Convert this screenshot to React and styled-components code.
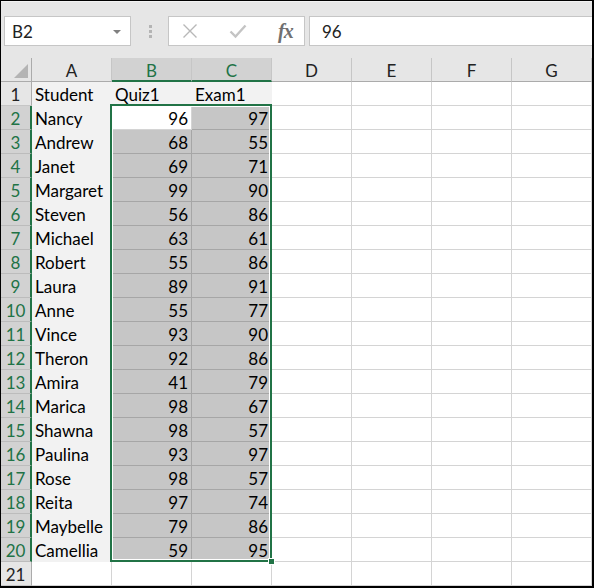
import React from "react";
import styled, { createGlobalStyle } from "styled-components";

const GREEN = "#217346";

const GlobalStyle = createGlobalStyle`
  body {
    margin: 0;
    background: #fff;
    font-family: Lato, "Liberation Sans", sans-serif;
  }
`;

const Frame = styled.div`
  width: 594px;
  height: 588px;
  box-sizing: border-box;
  border: 1px solid #000;
  border-right-width: 2px;
  border-bottom-width: 2px;
  overflow: hidden;
  background: #fff;
  font-size: 17px;
  color: #000;
`;

const Toolbar = styled.div`
  height: 57px;
  box-sizing: border-box;
  background: #e6e6e6;
  border-top: 1px solid #f2f2f2;
  display: flex;
  align-items: flex-start;
  padding: 14px 0 0 3px;
`;

const NameBox = styled.div`
  width: 127px;
  height: 30px;
  box-sizing: border-box;
  background: #fff;
  border: 1px solid #c6c6c6;
  display: flex;
  align-items: center;
  justify-content: space-between;
  padding: 1px 9px 0 7px;
  color: #222;
`;

const DropArrow = styled.span`
  width: 0;
  height: 0;
  border-left: 4px solid transparent;
  border-right: 4px solid transparent;
  border-top: 4px solid #808080;
`;

const Grip = styled.div`
  margin: 9px 0 0 18px;
  display: flex;
  flex-direction: column;
  gap: 2px;
  span {
    width: 3px;
    height: 3px;
    background: #b4b4b4;
  }
`;

const FuncBox = styled.div`
  margin-left: 16px;
  width: 137px;
  height: 30px;
  box-sizing: border-box;
  background: #fff;
  border: 1px solid #c6c6c6;
  display: flex;
  align-items: center;
  padding-left: 13px;
  gap: 31px;
`;

const Fx = styled.span`
  font-family: "Liberation Serif", serif;
  font-style: italic;
  font-weight: bold;
  font-size: 20px;
  color: #707070;
  letter-spacing: -1px;
`;

const FormulaInput = styled.div`
  flex: 1;
  margin: 0 -4px 0 4px;
  height: 30px;
  box-sizing: border-box;
  background: #fff;
  border: 1px solid #c6c6c6;
  display: flex;
  align-items: center;
  padding: 1px 0 0 12px;
  color: #222;
`;

const Sheet = styled.div`
  position: relative;
  display: grid;
  grid-template-columns: 31px repeat(7, 80px);
  grid-auto-rows: 24px;
`;

const Corner = styled.div`
  background: #e6e6e6;
  border-right: 1px solid #ababab;
  border-bottom: 1px solid #ababab;
  box-sizing: border-box;
  display: flex;
  align-items: flex-end;
  justify-content: flex-end;
  padding: 0 3px 3px 0;
`;

const ColHead = styled.div`
  box-sizing: border-box;
  background: ${(p) => (p.$active ? "#d2d2d2" : "#e6e6e6")};
  color: ${(p) => (p.$active ? GREEN : "#222")};
  border-right: 1px solid #c6c6c6;
  border-bottom: ${(p) => (p.$active ? `2px solid ${GREEN}` : "1px solid #ababab")};
  text-align: center;
  line-height: 25px;
`;

const RowHead = styled.div`
  box-sizing: border-box;
  background: ${(p) => (p.$active ? "#d2d2d2" : "#e6e6e6")};
  color: ${(p) => (p.$active ? GREEN : "#222")};
  border-bottom: 1px solid ${(p) => (p.$active ? "#bcbcbc" : "#c6c6c6")};
  border-right: ${(p) => (p.$active ? `2px solid ${GREEN}` : "1px solid #ababab")};
  text-align: center;
  line-height: 25px;
  overflow: hidden;
  padding-right: ${(p) => (p.$active ? "0" : "1px")};
`;

const Cell = styled.div`
  box-sizing: border-box;
  background: ${(p) => p.$bg};
  border-right: 1px solid ${(p) => p.$line};
  border-bottom: 1px solid ${(p) => p.$line};
  text-align: ${(p) => (p.$num ? "right" : "left")};
  padding: ${(p) => (p.$num ? "0 3px 0 0" : "0 0 0 3px")};
  line-height: 25px;
  white-space: nowrap;
  overflow: hidden;
`;

const Selection = styled.div`
  position: absolute;
  left: 109px;
  top: 46px;
  width: 162px;
  height: 458px;
  box-sizing: border-box;
  border: 2px solid ${GREEN};
  box-shadow: inset 0 0 0 1px #fff;
  pointer-events: none;
`;

const Handle = styled.div`
  position: absolute;
  right: -5px;
  bottom: -5px;
  width: 7px;
  height: 7px;
  box-sizing: border-box;
  background: ${GREEN};
  border: 1px solid #fff;
`;

const students = [
  ["Nancy", 96, 97],
  ["Andrew", 68, 55],
  ["Janet", 69, 71],
  ["Margaret", 99, 90],
  ["Steven", 56, 86],
  ["Michael", 63, 61],
  ["Robert", 55, 86],
  ["Laura", 89, 91],
  ["Anne", 55, 77],
  ["Vince", 93, 90],
  ["Theron", 92, 86],
  ["Amira", 41, 79],
  ["Marica", 98, 67],
  ["Shawna", 98, 57],
  ["Paulina", 93, 97],
  ["Rose", 98, 57],
  ["Reita", 97, 74],
  ["Maybelle", 79, 86],
  ["Camellia", 59, 95],
];

const columns = ["A", "B", "C", "D", "E", "F", "G"];

const LIGHT = { $bg: "#f2f2f2", $line: "#f2f2f2" };
const WHITE = { $bg: "#fff", $line: "#d4d4d4" };
const SELECTED = { $bg: "#c6c6c6", $line: "#a6a6a6" };

function rowCells(r) {
  // r is the sheet row number, 1..21
  const data = r === 1 ? ["Student", "Quiz1", "Exam1"] : students[r - 2];
  return columns.map((col, i) => {
    let look = WHITE;
    let value = "";
    let num = false;
    if (data && i < 3) {
      value = data[i];
      num = r > 1 && i > 0;
      if (r === 1 || i === 0) look = LIGHT;
      else if (r === 2 && i === 1) look = WHITE;
      else look = SELECTED;
    }
    return (
      <Cell key={col + r} {...look} $num={num}>
        {value}
      </Cell>
    );
  });
}

function XIcon() {
  return (
    <svg width="16" height="16" viewBox="0 0 16 16">
      <path d="M1.5 1.5 L14.5 14.5 M14.5 1.5 L1.5 14.5" stroke="#b8b8b8" strokeWidth="1.4" fill="none" />
    </svg>
  );
}

function CheckIcon() {
  return (
    <svg width="18" height="16" viewBox="0 0 18 16">
      <path d="M1.5 8.5 L6.5 13.5 L16.5 2.5" stroke="#c4c4c4" strokeWidth="2.4" fill="none" />
    </svg>
  );
}

export default function App() {
  const rows = [];
  for (let r = 1; r <= 21; r++) {
    const active = r >= 2 && r <= 20;
    rows.push(
      <RowHead key={"h" + r} $active={active}>
        {r}
      </RowHead>
    );
    rows.push(...rowCells(r));
  }

  return (
    <>
      <GlobalStyle />
      <Frame>
        <Toolbar>
          <NameBox>
            B2
            <DropArrow />
          </NameBox>
          <Grip>
            <span />
            <span />
            <span />
          </Grip>
          <FuncBox>
            <XIcon />
            <CheckIcon />
            <Fx>fx</Fx>
          </FuncBox>
          <FormulaInput>96</FormulaInput>
        </Toolbar>
        <Sheet>
          <Corner>
            <svg width="14" height="14" viewBox="0 0 14 14">
              <polygon points="14,0 14,14 0,14" fill="#b4b4b4" />
            </svg>
          </Corner>
          {columns.map((c) => (
            <ColHead key={c} $active={c === "B" || c === "C"}>
              {c}
            </ColHead>
          ))}
          {rows}
          <Selection>
            <Handle />
          </Selection>
        </Sheet>
      </Frame>
    </>
  );
}
